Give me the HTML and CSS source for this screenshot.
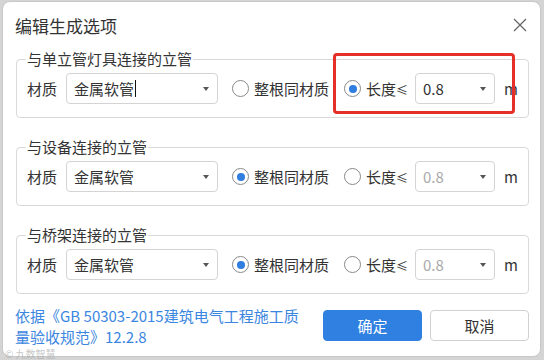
FILE: index.html
```html
<!DOCTYPE html>
<html lang="zh">
<head>
<meta charset="utf-8">
<link rel="stylesheet" href="styles.css">
</head>
<body>
<div class="dialog">
  <div class="header">
    <span class="title">编辑生成选项</span>
    <svg class="close" width="14" height="14" viewBox="0 0 14 14"><path d="M1 1L13 13M13 1L1 13" stroke="#666" stroke-width="1.3" fill="none"/></svg>
  </div>

  <fieldset class="group">
    <legend>与单立管灯具连接的立管</legend>
    <div class="row">
      <span class="label">材质</span>
      <div class="select mat"><span class="val">金属软管</span><span class="caret-text"></span><span class="arrow"></span></div>
      <span class="radio"></span><span class="rtext">整根同材质</span>
      <span class="radio on"></span><span class="rtext">长度<span class="le">≤</span></span>
      <div class="select len"><span class="val">0.8</span><span class="arrow"></span></div>
      <span class="unit">m</span>
    </div>
  </fieldset>

  <fieldset class="group">
    <legend>与设备连接的立管</legend>
    <div class="row">
      <span class="label">材质</span>
      <div class="select mat"><span class="val">金属软管</span><span class="arrow"></span></div>
      <span class="radio on"></span><span class="rtext">整根同材质</span>
      <span class="radio"></span><span class="rtext">长度<span class="le">≤</span></span>
      <div class="select len disabled"><span class="val">0.8</span><span class="arrow"></span></div>
      <span class="unit">m</span>
    </div>
  </fieldset>

  <fieldset class="group">
    <legend>与桥架连接的立管</legend>
    <div class="row">
      <span class="label">材质</span>
      <div class="select mat"><span class="val">金属软管</span><span class="arrow"></span></div>
      <span class="radio on"></span><span class="rtext">整根同材质</span>
      <span class="radio"></span><span class="rtext">长度<span class="le">≤</span></span>
      <div class="select len disabled"><span class="val">0.8</span><span class="arrow"></span></div>
      <span class="unit">m</span>
    </div>
  </fieldset>

  <div class="footer">
    <div class="link">依据《GB 50303-2015建筑电气工程施工质<br>量验收规范》12.2.8</div>
    <div class="buttons">
      <button class="btn primary">确定</button>
      <button class="btn">取消</button>
    </div>
  </div>

  <div class="highlight"></div>
  <div class="watermark">© 九数智慧</div>
</div>
</body>
</html>
```

FILE: styles.css
```css
* { box-sizing: border-box; }
html, body { margin: 0; padding: 0; }
body {
  width: 544px;
  height: 360px;
  background: #d4d4d4;
  font-family: "Noto Sans CJK SC", "Noto Sans", sans-serif;
  color: #333;
  overflow: hidden;
  padding: 1px 3px 0 2px;
}
.dialog {
  position: relative;
  width: 539px;
  height: 356px;
  background: #fff;
  border-radius: 8px;
  border: 1px solid #c8c8c8;
  display: flex;
  flex-direction: column;
}
.header {
  height: 47px;
  display: flex;
  align-items: center;
  justify-content: space-between;
  padding: 0 13px 0 12px;
}
.title {
  font-size: 17px;
  line-height: 24px;
  color: #333;
}
.close { margin-top: -1px; }

.group {
  margin: 0 11px 0 13px;
  padding: 4px 10px 13px 10px;
  border: 1px solid #d9d9d9;
  border-radius: 4px;
  min-width: 0;
}
.group + .group { margin-top: 19px; }
.group legend {
  font-size: 15px;
  line-height: 20px;
  padding: 0 1px;
  margin-left: -1px;
  color: #333;
}
.row {
  display: flex;
  align-items: center;
  height: 31px;
  font-size: 15px;
  white-space: nowrap;
}
.row > * { flex: none; }
.label { width: 39px; }
.select {
  position: relative;
  height: 31px;
  border: 1px solid #d4d4d4;
  border-radius: 4px;
  display: flex;
  align-items: center;
  padding-left: 7px;
  font-size: 15px;
}
.select.mat { width: 152px; }
.select.len { width: 80px; margin-left: 7px; }
.select.disabled { color: #aaa; }
.arrow {
  position: absolute;
  right: 8px;
  top: 13px;
  width: 0;
  height: 0;
  border-left: 3px solid transparent;
  border-right: 3px solid transparent;
  border-top: 4px solid #555;
}
.caret-text {
  display: inline-block;
  width: 1px;
  height: 17px;
  background: #111;
  margin-left: 1px;
}
.radio {
  width: 17px;
  height: 17px;
  border: 1px solid #888;
  border-radius: 50%;
  margin-left: 14px;
  display: flex;
  align-items: center;
  justify-content: center;
}
.radio.on::after {
  content: "";
  width: 8px;
  height: 8px;
  border-radius: 50%;
  background: #2e7ddf;
}
.rtext + .radio { margin-left: 15px; }
.rtext { margin-left: 5px; }
.le { font-size: 12px; }
.unit { margin-left: 9px; }

.footer {
  display: flex;
  justify-content: space-between;
  align-items: flex-start;
  padding: 11px 11px 0 12px;
}
.link {
  color: #3b86e0;
  font-size: 15px;
  line-height: 21px;
  white-space: nowrap;
}
.buttons {
  display: flex;
  gap: 8px;
  margin-top: 5px;
}
.btn {
  width: 99px;
  height: 31px;
  border-radius: 4px;
  font-family: "Noto Sans CJK SC", sans-serif;
  font-size: 15px;
  border: 1px solid #d0d0d0;
  background: #fff;
  color: #333;
  padding: 0;
}
.btn.primary {
  background: #2f80e1;
  border-color: #2f80e1;
  color: #fff;
}
.highlight {
  position: absolute;
  left: 330px;
  top: 51px;
  width: 182px;
  height: 61px;
  border: 3px solid #e5302a;
  border-radius: 4px;
}
.watermark {
  position: absolute;
  left: 2px;
  bottom: -3px;
  font-size: 10px;
  line-height: 11px;
  color: rgba(160,160,160,0.6);
}
```
